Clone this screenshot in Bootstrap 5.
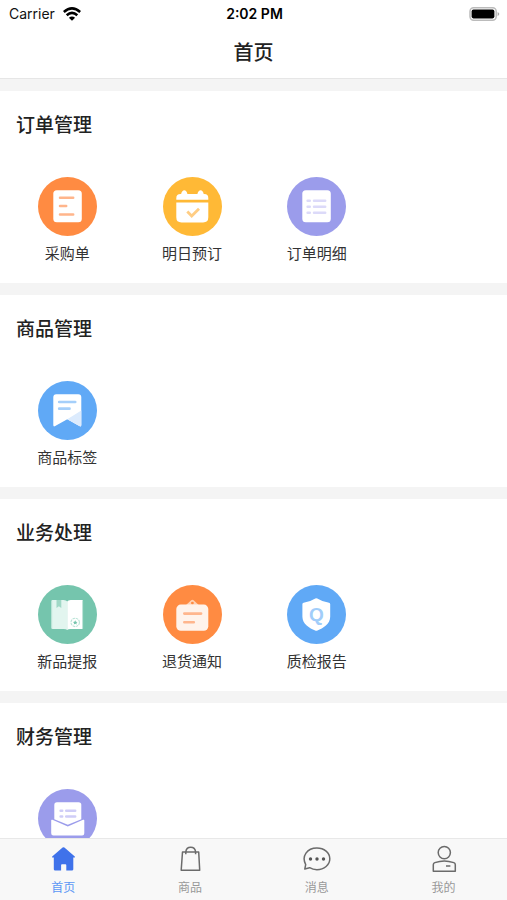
<!DOCTYPE html>
<html lang="zh-CN">
<head>
<meta charset="utf-8">
<meta name="viewport" content="width=device-width, initial-scale=1">
<title>首页</title>
<link href="https://cdn.jsdelivr.net/npm/bootstrap@5.3.0/dist/css/bootstrap.min.css" rel="stylesheet">
<style>
  body { font-family: "Liberation Sans", "Noto Sans CJK SC", sans-serif; background: #fff; color: #222; }
  .app { height: 100vh; }
  .status { height: 28px; font: 14px/28px Inter, sans-serif; color: #111; padding: 0 7px 0 9px; }
  .status-time { font-weight: 600; color: #000; }
  .page-title { font-size: 20px; line-height: 30px; font-weight: 500; margin: 0; padding: 10px 0; text-align: center; }
  .topbar { border-bottom: 1px solid #e6e6e6; }
  .content { background: #f4f4f4; padding-top: 12px; scrollbar-width: none; min-height: 0; }
  .content::-webkit-scrollbar { display: none; }
  .panel { background: #fff; min-height: 192px; padding: 20px 3px 16px 5px; margin-bottom: 12px; }
  .panel-title { font-size: 19px; line-height: 30px; font-weight: 500; margin: 0 0 36px; padding-left: 11px; }
  .tile { color: #333; font-size: 15px; line-height: 24px; text-decoration: none; }
  .tile svg { width: 59px; height: 59px; margin-bottom: 6px; display: block; }
  .tabs { background: #f8f8f8; border-top: 1px solid #e8e8e8; height: 62px; }
  .tab { color: #999; font-size: 12px; line-height: 18px; text-decoration: none; padding-top: 6px; }
  .tab svg { width: 28px; height: 28px; margin-bottom: 6px; display: block; fill: none; stroke: #6b6b6b; stroke-width: 1.5; }
  .tab.active { color: #5b97f5; }
</style>
<script defer src="https://cdn.jsdelivr.net/npm/bootstrap@5.3.0/dist/js/bootstrap.bundle.min.js"></script>
</head>
<body>
<div class="app d-flex flex-column">
  <header class="topbar flex-shrink-0">
    <div class="status row g-0">
      <div class="col d-flex align-items-center gap-2">
        <span>Carrier</span>
        <svg width="18" height="14" viewBox="0 0 18 14" fill="none" stroke="#000" stroke-width="2.6" aria-hidden="true"><path d="M.8 5Q9-2.2 17.2 5M3.7 8.3Q9 3.6 14.3 8.3"/><path d="M9 13.8 5.9 10.7Q9 8.1 12.1 10.7Z" fill="#000" stroke="none"/></svg>
      </div>
      <div class="col-auto status-time">2:02 PM</div>
      <div class="col d-flex align-items-center justify-content-end">
        <svg width="31" height="14" viewBox="0 0 31 14" aria-hidden="true"><rect x="1" y=".8" width="26.2" height="12.4" rx="3.6" fill="#fff" stroke="#bbb" stroke-width="1.5"/><rect x="2.6" y="2.6" width="22.8" height="8.8" rx="1.8"/><path d="M28.6 5q3.4 2 0 4.2z" fill="#aaa"/></svg>
      </div>
    </div>
    <h1 class="page-title">首页</h1>
  </header>

  <main class="content flex-grow-1 overflow-auto">
    <section class="panel">
      <h2 class="panel-title">订单管理</h2>
      <div class="row row-cols-4 g-0">
        <div class="col"><a class="tile d-flex flex-column align-items-center" href="#">
          <svg viewBox="0 0 59 59" aria-hidden="true"><circle cx="29.5" cy="29.5" r="29.5" fill="#ff8b42"/><rect x="15.3" y="13.3" width="28.5" height="32" rx="3.5" fill="#fff"/><path d="M22 20.8h13.2M22 29.1h6.2M22 37.4h13.2" stroke="#ffb58b" stroke-width="2.5" stroke-linecap="round"/></svg>
          采购单</a></div>
        <div class="col"><a class="tile d-flex flex-column align-items-center" href="#">
          <svg viewBox="0 0 59 59" aria-hidden="true"><circle cx="29.5" cy="29.5" r="29.5" fill="#ffb936"/><path d="M13.3 22.8v-1.6q0-4.2 4.2-4.2h.6q1-3.7 3.2-3.7t3.1 3.7h10q1-3.7 3.2-3.7t3.1 3.7h.6q4 0 4 4.2v1.6zM13.3 25.4h32v14.8q0 5.2-5.2 5.2H18.5q-5.2 0-5.2-5.2z" fill="#fff"/><path d="M24.3 34.6 28.7 39 36 31.8" fill="none" stroke="#ffcd83" stroke-width="2.8"/></svg>
          明日预订</a></div>
        <div class="col"><a class="tile d-flex flex-column align-items-center" href="#">
          <svg viewBox="0 0 59 59" aria-hidden="true"><circle cx="29.5" cy="29.5" r="29.5" fill="#9b9ceb"/><rect x="15.3" y="13.3" width="28.5" height="32" rx="3.5" fill="#fff"/><path d="M20.6 23.7h2.2M20.6 29.7h2.2M20.6 35.7h2.2M27 23.7h11.2M27 29.7h11.2M27 35.7h11.2" stroke="#dcdaf9" stroke-width="2.5" stroke-linecap="round"/></svg>
          订单明细</a></div>
      </div>
    </section>

    <section class="panel">
      <h2 class="panel-title">商品管理</h2>
      <div class="row row-cols-4 g-0">
        <div class="col"><a class="tile d-flex flex-column align-items-center" href="#">
          <svg viewBox="0 0 59 59" aria-hidden="true"><circle cx="29.5" cy="29.5" r="29.5" fill="#60a9f6"/><path d="M18.3 13.3h22q3 0 3 3v27.8q0 2.2-2 1L29.3 38.2 17.2 45.1q-1.9 1.2-1.9-1V16.3q0-3 3-3z" fill="#fff"/><path d="M43.3 29.5v14.6q0 2.2-2 1L29.3 38.2z" fill="#dcebfd"/><path d="M21.2 21h16M21.2 27.7H31.5" stroke="#a5cffa" stroke-width="2.7" stroke-linecap="round"/></svg>
          商品标签</a></div>
      </div>
    </section>

    <section class="panel">
      <h2 class="panel-title">业务处理</h2>
      <div class="row row-cols-4 g-0">
        <div class="col"><a class="tile d-flex flex-column align-items-center" href="#">
          <svg viewBox="0 0 59 59" aria-hidden="true"><circle cx="29.5" cy="29.5" r="29.5" fill="#75c5ad"/><path d="M13.3 16.2q0-1.2 1.4-1.2h10.8q3 0 3.7 1.5v28.4q-1-1-3.4-1H14.5q-1.2 0-1.2-1.3z" fill="#e2f5ef"/><path d="M29.2 16.5q.8-1.5 3.5-1.5h11q1.3 0 1.3 1.2v26.4q0 1.3-1.2 1.3H32.4q-2.2 0-3.2 1z" fill="#fff"/><path d="M13.7 16v27.4M44.6 16v27.4" stroke="#b8e2d5" stroke-width="1"/><path d="M18.5 15h4.8v8l-2.4-1.7L18.5 23z" fill="#a0d8c6"/><circle cx="37.2" cy="37.4" r="4.2" fill="none" stroke="#b9e3d6" stroke-width="1.1" stroke-dasharray="2.6 .7"/><path d="m37.2 35.2.7 1.5 1.6.2-1.1 1.1.3 1.6-1.5-.8-1.4.8.3-1.6-1.2-1.1 1.6-.2z" fill="#75c5ad"/></svg>
          新品提报</a></div>
        <div class="col"><a class="tile d-flex flex-column align-items-center" href="#">
          <svg viewBox="0 0 59 59" aria-hidden="true"><circle cx="29.5" cy="29.5" r="29.5" fill="#ff8b42"/><path d="m22 21 6.2-5.8q1.2-1 2.4 0L36.8 21z" fill="#ffd2b5"/><circle cx="29.4" cy="18.1" r="1.4" fill="#ff8b42"/><rect x="13.3" y="19.6" width="32" height="26.2" rx="4.5" fill="#fff3eb"/><path d="M21.3 28.6h16.8M21.3 37.2h9.5" stroke="#ffb68d" stroke-width="2.6" stroke-linecap="round"/></svg>
          退货通知</a></div>
        <div class="col"><a class="tile d-flex flex-column align-items-center" href="#">
          <svg viewBox="0 0 59 59" aria-hidden="true"><circle cx="29.5" cy="29.5" r="29.5" fill="#60a9f6"/><path d="M28.3 13.5q1-.5 2 0 5 3.3 11.7 4.2 1.2.2 1.2 1.4v12.6c0 7.2-7.2 11.6-12.7 13.8q-1.2.4-2.4 0c-5.5-2.2-12.7-6.6-12.7-13.8V19.1q0-1.2 1.2-1.4 6.7-.9 11.7-4.2z" fill="#fff"/><text x="29.3" y="36" text-anchor="middle" font-family="Liberation Sans, sans-serif" font-weight="700" font-size="19" fill="#a1cdfa">Q</text></svg>
          质检报告</a></div>
      </div>
    </section>

    <section class="panel mb-0">
      <h2 class="panel-title" id="finance">财务管理</h2>
      <div class="row row-cols-4 g-0">
        <div class="col"><a class="tile d-flex flex-column align-items-center" href="#" aria-labelledby="finance">
          <svg viewBox="0 0 59 59" aria-hidden="true"><circle cx="29.5" cy="29.5" r="29.5" fill="#9b9ceb"/><path d="M19 13.3h21.6q2.7 0 2.7 2.7v14.2l-13.5 5.6-13.5-5.6V16q0-2.7 2.7-2.7z" fill="#fff"/><path d="M13.2 31.5q0-1.2 1.2-.7l15.4 6.8 15.3-6.8q1.2-.5 1.2.7v12.8q0 2.2-2.2 2.2H15.4q-2.2 0-2.2-2.2z" fill="#fff"/><path d="M22.6 21.8h1.6M22.6 27.4h1.6M28.2 21.8h9M28.2 27.4h9" stroke="#cfcdf7" stroke-width="2.5" stroke-linecap="round"/></svg>
        </a></div>
      </div>
    </section>
  </main>

  <nav class="tabs flex-shrink-0 row row-cols-4 g-0" aria-label="主导航">
    <a class="tab active d-flex flex-column align-items-center" href="#" aria-current="page">
      <svg viewBox="0 0 28 28" aria-hidden="true"><path d="M13.6 2.6q.9-.8 1.8 0L25.8 11.6q.7.9-.4 1h-1.1v11.6q0 1.4-1.4 1.4h-5.6v-5.4q0-.9-.9-.9h-3.4q-.9 0-.9.9v5.4H6.2q-1.4 0-1.4-1.4V12.6H3.6q-1.1-.1-.4-1z" fill="#3f72ea" stroke="none"/></svg>
      首页</a>
    <a class="tab d-flex flex-column align-items-center" href="#">
      <svg viewBox="0 0 28 28" aria-hidden="true"><path d="M6.5 7h16.2l1 18.2H5.2zM9.8 9.2V6.8q.5-4.5 4.9-4.5t4.9 4.5v2.4" stroke-linejoin="round"/></svg>
      商品</a>
    <a class="tab d-flex flex-column align-items-center" href="#">
      <svg viewBox="0 0 28 28" aria-hidden="true"><path d="M2.7 19.6C-1.8 11.2 4.2 3 13.9 3c7.3 0 12.9 4.7 12.9 10.8S21.2 24.7 13.9 24.7c-2.8 0-5.2-.7-7.3-2L1.8 24z" stroke-linejoin="round"/><g fill="#555" stroke="none"><circle cx="7.5" cy="14" r="1.7"/><circle cx="14" cy="14" r="1.7"/><circle cx="20.5" cy="14" r="1.7"/></g></svg>
      消息</a>
    <a class="tab d-flex flex-column align-items-center" href="#">
      <svg viewBox="0 0 28 28" aria-hidden="true"><circle cx="14.3" cy="7.6" r="6.1"/><path d="M3.3 26.2v-6.4q0-1.6 1.5-2.2Q9.8 16 14.3 16t9.5 1.6q1.5.6 1.5 2.2v6.4zM16 21h4.4" stroke-linejoin="round"/></svg>
      我的</a>
  </nav>
</div>
</body>
</html>
